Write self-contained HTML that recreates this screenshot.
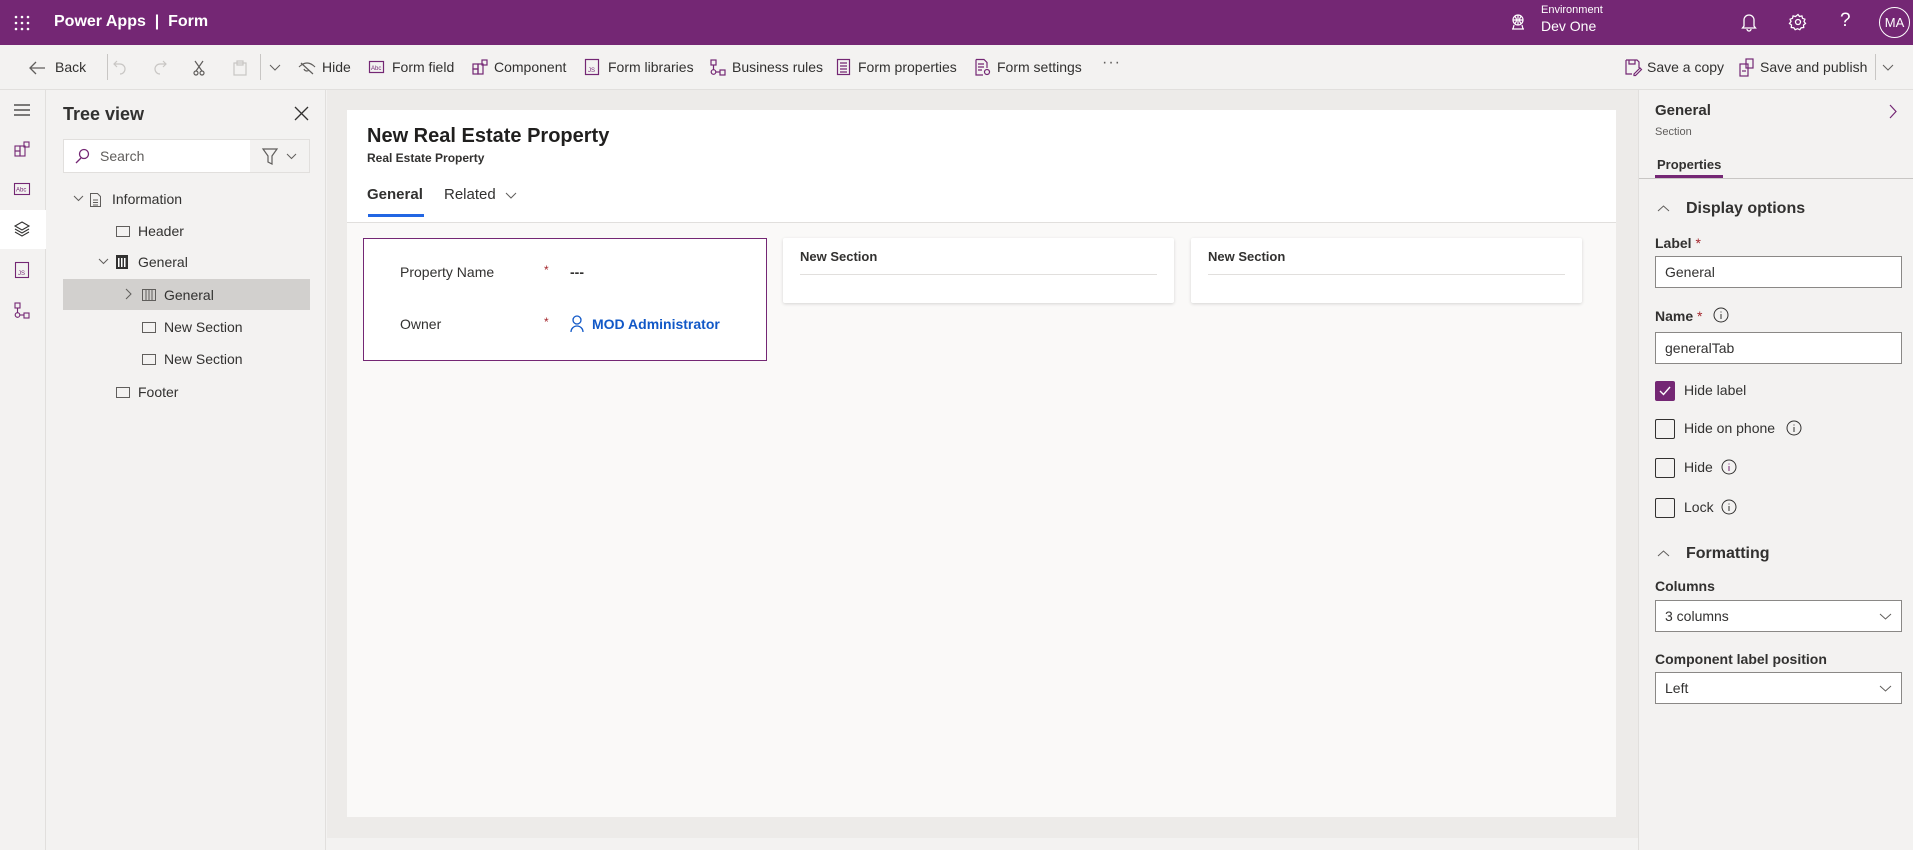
<!DOCTYPE html>
<html><head><meta charset="utf-8"><style>
*{box-sizing:border-box;margin:0;padding:0}
body{width:1913px;height:850px;overflow:hidden;font-family:"Liberation Sans",sans-serif;background:#f3f2f1;position:relative;color:#323130}
.a{position:absolute;white-space:nowrap}
svg{position:absolute;overflow:visible}
</style></head><body>
<!-- top bar -->
<div class="a" style="left:0;top:0;width:1913px;height:45px;background:#742774"></div>
<svg style="left:14px;top:15px" width="16" height="16" fill="#fff"><circle cx="2" cy="2" r="1.3"/><circle cx="8" cy="2" r="1.3"/><circle cx="14" cy="2" r="1.3"/><circle cx="2" cy="8" r="1.3"/><circle cx="8" cy="8" r="1.3"/><circle cx="14" cy="8" r="1.3"/><circle cx="2" cy="14" r="1.3"/><circle cx="8" cy="14" r="1.3"/><circle cx="14" cy="14" r="1.3"/></svg>
<div class="a" style="left:54px;top:13px;color:#fff;font-size:16px;font-weight:bold">Power Apps &nbsp;|&nbsp; Form</div>
<svg style="left:1510px;top:14px" width="16" height="16" fill="none" stroke="#fff" stroke-width="1.2"><circle cx="8" cy="6" r="5"/><path d="M3 6h10M8 1v10M5 2.5q3 3.5 0 7M11 2.5q-3 3.5 0 7M2 15h12M4 11l-1 4M12 11l1 4"/></svg>
<div class="a" style="left:1541px;top:4px;color:#fff;font-size:11px">Environment</div>
<div class="a" style="left:1541px;top:18px;color:#fff;font-size:14px">Dev One</div>
<svg style="left:1741px;top:13px" width="16" height="18" fill="none" stroke="#fff" stroke-width="1.3"><path d="M3 13V7a5 5 0 0110 0v6l1.5 2h-13zM6 16a2 2 0 004 0"/></svg>
<svg style="left:1789px;top:13px" width="18" height="18" fill="none" stroke="#fff" stroke-width="1.3"><circle cx="9" cy="9" r="2.5"/><path d="M9 1.5l1.5 2 2.4-.6.6 2.4 2.4.9-.9 2.3 1.5 2-2 1.5.2 2.5-2.5.2-1.4 2-2.3-1-2.3 1-1.4-2-2.5-.2.2-2.5-2-1.5 1.5-2-.9-2.3 2.4-.9.6-2.4 2.4.6z"/></svg>
<div class="a" style="left:1840px;top:10px;color:#fff;font-size:19px">?</div>
<div class="a" style="left:1879px;top:7px;width:31px;height:31px;border:1.3px solid #fff;border-radius:50%;color:#fff;font-size:13px;text-align:center;line-height:29px">MA</div>
<!-- toolbar -->
<div class="a" style="left:0;top:45px;width:1913px;height:45px;background:#f3f2f1;border-bottom:1px solid #e1dfdd"></div>
<div style="position:absolute;left:0;top:59px;font-size:14px;color:#323130">
<svg style="left:29px;top:2px" width="17" height="14" fill="none" stroke="#605e5c" stroke-width="1.3"><path d="M16 7H1M7 1L1 7l6 6"/></svg>
<div class="a" style="left:55px;top:0">Back</div>
<div class="a" style="left:107px;top:-5px;height:26px;border-left:1px solid #c8c6c4"></div>
<svg style="left:113px;top:1px" width="14" height="16" fill="none" stroke="#c8c6c4" stroke-width="1.2"><path d="M4 1L1 4l3 3M1 4h6a5 5 0 010 10"/></svg>
<svg style="left:153px;top:1px" width="14" height="16" fill="none" stroke="#c8c6c4" stroke-width="1.2"><path d="M10 1l3 3-3 3M13 4H7a5 5 0 000 10"/></svg>
<svg style="left:193px;top:1px" width="12" height="16" fill="none" stroke="#605e5c" stroke-width="1.2"><path d="M2 1l7 10M10 1L3 11"/><circle cx="3" cy="13" r="2"/><circle cx="9" cy="13" r="2"/></svg>
<svg style="left:233px;top:1px" width="14" height="16" fill="none" stroke="#c8c6c4" stroke-width="1.2"><rect x="1" y="3" width="12" height="12"/><rect x="4" y="1" width="6" height="4"/></svg>
<div class="a" style="left:260px;top:-5px;height:26px;border-left:1px solid #c8c6c4"></div>
<svg style="left:269px;top:5px" width="12" height="7" fill="none" stroke="#605e5c"><path d="M1 1l5 5 5-5"/></svg>
<svg style="left:298px;top:1px" width="18" height="14" fill="none" stroke="#605e5c" stroke-width="1.2"><path d="M1 7q8-8 16 0M3 3l12 11M6 9a3 3 0 005 1"/></svg>
<div class="a" style="left:322px;top:0">Hide</div>
<svg style="left:369px;top:2px" width="15" height="12" fill="none" stroke="#742774" stroke-width="1.2"><rect x=".5" y=".5" width="14" height="11"/><text x="2" y="9" font-size="6" fill="#742774" stroke="none">Abc</text></svg>
<div class="a" style="left:392px;top:0">Form field</div>
<svg style="left:472px;top:0" width="16" height="16" fill="none" stroke="#742774" stroke-width="1.2"><rect x="1" y="5" width="5" height="5"/><rect x="1" y="10" width="5" height="5"/><rect x="6" y="5" width="5" height="10"/><rect x="10" y="1" width="5" height="5"/></svg>
<div class="a" style="left:494px;top:0">Component</div>
<svg style="left:585px;top:0" width="14" height="16" fill="none" stroke="#742774" stroke-width="1.2"><rect x=".5" y=".5" width="13" height="15"/><text x="3" y="13" font-size="6" fill="#742774" stroke="none">JS</text></svg>
<div class="a" style="left:608px;top:0">Form libraries</div>
<svg style="left:710px;top:0" width="16" height="17" fill="none" stroke="#742774" stroke-width="1.2"><rect x="1" y="1" width="5" height="5"/><path d="M3.5 6v5"/><circle cx="3.5" cy="13" r="2.3"/><rect x="10" y="11" width="5" height="5"/><path d="M6 13h4"/></svg>
<div class="a" style="left:732px;top:0">Business rules</div>
<svg style="left:837px;top:0" width="13" height="16" fill="none" stroke="#742774" stroke-width="1.2"><rect x=".5" y=".5" width="12" height="15"/><path d="M3 4h7M3 7h7M3 10h7M3 13h7"/></svg>
<div class="a" style="left:858px;top:0">Form properties</div>
<svg style="left:975px;top:0" width="16" height="17" fill="none" stroke="#742774" stroke-width="1.2"><path d="M1 .5h8l3 3V9M1 .5V16h7M3 5h6M3 8h6M3 11h4"/><circle cx="12" cy="13" r="2.5"/></svg>
<div class="a" style="left:997px;top:0">Form settings</div>
<div class="a" style="left:1102px;top:-5px;color:#605e5c;font-size:16px;letter-spacing:1px">···</div>
<svg style="left:1625px;top:0" width="17" height="17" fill="none" stroke="#742774" stroke-width="1.2"><path d="M1 1h11l2 2v6M1 1v14h6M4 1v4h6V1"/><path d="M9 15l6-6 1.5 1.5-6 6H9z"/></svg>
<div class="a" style="left:1647px;top:0">Save a copy</div>
<svg style="left:1739px;top:-1px" width="15" height="19" fill="none" stroke="#742774" stroke-width="1.2"><rect x="1" y="6" width="8" height="12"/><rect x="7" y="1" width="7" height="9"/><path d="M3 13h4"/></svg>
<div class="a" style="left:1760px;top:0">Save and publish</div>
<div class="a" style="left:1875px;top:-5px;height:26px;border-left:1px solid #c8c6c4"></div>
<svg style="left:1882px;top:5px" width="12" height="7" fill="none" stroke="#605e5c"><path d="M1 1l5 5 5-5"/></svg>
</div>
<!-- left rail -->
<div class="a" style="left:0;top:90px;width:46px;height:760px;background:#f3f2f1;border-right:1px solid #e1dfdd"></div>
<div class="a" style="left:0;top:210px;width:46px;height:39px;background:#fff"></div>
<svg style="left:14px;top:104px" width="16" height="12" stroke="#323130" stroke-width="1.2"><path d="M0 1h16M0 6h16M0 11h16"/></svg>
<svg style="left:14px;top:141px" width="16" height="16" fill="none" stroke="#742774" stroke-width="1.1"><rect x="1" y="5" width="5" height="5"/><rect x="1" y="10" width="5" height="5"/><rect x="6" y="5" width="5" height="10"/><rect x="10" y="1" width="5" height="5"/></svg>
<svg style="left:14px;top:183px" width="16" height="12" fill="none" stroke="#742774" stroke-width="1.1"><rect x=".5" y=".5" width="15" height="11"/><text x="2" y="8.5" font-size="6" fill="#742774" stroke="none">Abc</text></svg>
<svg style="left:14px;top:221px" width="16" height="16" fill="none" stroke="#323130" stroke-width="1.1"><path d="M8 1l7 4-7 4-7-4zM1 8l7 4 7-4M1 11l7 4 7-4"/></svg>
<svg style="left:15px;top:262px" width="14" height="16" fill="none" stroke="#742774" stroke-width="1.1"><rect x=".5" y=".5" width="13" height="15"/><text x="3" y="13" font-size="6" fill="#742774" stroke="none">JS</text></svg>
<svg style="left:14px;top:302px" width="16" height="17" fill="none" stroke="#742774" stroke-width="1.1"><rect x="1" y="1" width="5" height="5"/><path d="M3.5 6v5"/><circle cx="3.5" cy="13" r="2.3"/><rect x="10" y="11" width="5" height="5"/><path d="M6 13h4"/></svg>
<!-- tree -->
<div class="a" style="left:46px;top:90px;width:280px;height:760px;background:#f3f2f1;border-right:1px solid #e1dfdd"></div>
<div class="a" style="left:63px;top:104px;font-size:18px;font-weight:bold;color:#323130">Tree view</div>
<svg style="left:295px;top:107px" width="13" height="13" stroke="#323130" stroke-width="1.3"><path d="M0 0l13 13M13 0L0 13"/></svg>
<div class="a" style="left:63px;top:139px;width:247px;height:34px;background:#fff;border:1px solid #e1dfdd"></div>
<div class="a" style="left:250px;top:140px;width:59px;height:32px;background:#f3f2f1"></div>
<svg style="left:75px;top:148px" width="14" height="16" fill="none" stroke="#742774" stroke-width="1.3"><circle cx="9" cy="6" r="4.5"/><path d="M6 10L1 15"/></svg>
<div class="a" style="left:100px;top:148px;font-size:14px;color:#605e5c">Search</div>
<svg style="left:262px;top:148px" width="16" height="17" fill="none" stroke="#605e5c" stroke-width="1.2"><path d="M1 1h14L10 8v8l-4-2V8z"/></svg>
<svg style="left:286px;top:153px" width="11" height="6" fill="none" stroke="#605e5c"><path d="M1 1l4.5 4.5L10 1"/></svg>
<div class="a" style="left:63px;top:279px;width:247px;height:31px;background:#d2d0ce"></div>
<div style="position:absolute;left:0;top:0;font-size:14px;color:#323130">
<svg style="left:73px;top:195px" width="11" height="7" fill="none" stroke="#605e5c"><path d="M1 1l4.5 4.5L10 1"/></svg>
<svg style="left:90px;top:193px" width="11" height="14" fill="none" stroke="#605e5c"><path d="M.5.5h7l3 3v10H.5zM3 7h5M3 9.5h5M3 12h5"/></svg>
<div class="a" style="left:112px;top:191px">Information</div>
<svg style="left:116px;top:226px" width="14" height="11" fill="none" stroke="#605e5c"><rect x=".5" y=".5" width="13" height="10"/></svg>
<div class="a" style="left:138px;top:223px">Header</div>
<svg style="left:98px;top:258px" width="11" height="7" fill="none" stroke="#605e5c"><path d="M1 1l4.5 4.5L10 1"/></svg>
<svg style="left:116px;top:255px" width="12" height="14" fill="#323130"><rect width="12" height="14"/><rect x="2" y="3" width="1.5" height="9" fill="#fff"/><rect x="5" y="3" width="1.5" height="9" fill="#fff"/><rect x="8" y="3" width="1.5" height="9" fill="#fff"/></svg>
<div class="a" style="left:138px;top:254px">General</div>
<svg style="left:125px;top:288px" width="7" height="12" fill="none" stroke="#605e5c"><path d="M1 1l5 5-5 5"/></svg>
<svg style="left:142px;top:289px" width="14" height="12" fill="none" stroke="#605e5c"><path d="M.5.5h13v11H.5zM4 .5v11M7 .5v11M10 .5v11"/></svg>
<div class="a" style="left:164px;top:287px">General</div>
<svg style="left:142px;top:322px" width="14" height="11" fill="none" stroke="#605e5c"><rect x=".5" y=".5" width="13" height="10"/></svg>
<div class="a" style="left:164px;top:319px">New Section</div>
<svg style="left:142px;top:354px" width="14" height="11" fill="none" stroke="#605e5c"><rect x=".5" y=".5" width="13" height="10"/></svg>
<div class="a" style="left:164px;top:351px">New Section</div>
<svg style="left:116px;top:387px" width="14" height="11" fill="none" stroke="#605e5c"><rect x=".5" y=".5" width="13" height="10"/></svg>
<div class="a" style="left:138px;top:384px">Footer</div>
</div>
<!-- canvas -->
<div class="a" style="left:327px;top:90px;width:1311px;height:748px;background:#edebe9"></div>
<div class="a" style="left:347px;top:110px;width:1269px;height:707px;background:#faf9f8"></div>
<div class="a" style="left:347px;top:110px;width:1269px;height:113px;background:#fff;border-bottom:1px solid #e1dfdd"></div>
<div class="a" style="left:367px;top:125px;font-size:20px;font-weight:bold;color:#201f1e">New Real Estate Property</div>
<div class="a" style="left:367px;top:151px;font-size:12px;font-weight:bold;color:#323130">Real Estate Property</div>
<div class="a" style="left:367px;top:186px;font-size:15px;font-weight:bold;color:#323130">General</div>
<div class="a" style="left:368px;top:214px;width:56px;height:3px;background:#2266e3"></div>
<div class="a" style="left:444px;top:186px;font-size:15px;color:#323130">Related</div>
<svg style="left:505px;top:192px" width="12" height="7" fill="none" stroke="#605e5c"><path d="M1 1l5 5 5-5"/></svg>
<div class="a" style="left:363px;top:238px;width:404px;height:123px;background:#fff;border:1px solid #742774"></div>
<div class="a" style="left:400px;top:264px;font-size:14px;color:#323130">Property Name</div>
<div class="a" style="left:544px;top:263px;font-size:12px;color:#a4262c">*</div>
<div class="a" style="left:570px;top:264px;font-size:14px;color:#323130;font-weight:bold">---</div>
<div class="a" style="left:400px;top:316px;font-size:14px;color:#323130">Owner</div>
<div class="a" style="left:544px;top:315px;font-size:12px;color:#a4262c">*</div>
<svg style="left:570px;top:315px" width="14" height="18" fill="none" stroke="#1158c7" stroke-width="1.3"><circle cx="7" cy="5" r="4"/><path d="M1 17a6 6 0 0112 0"/></svg>
<div class="a" style="left:592px;top:316px;font-size:14px;color:#1158c7;font-weight:bold">MOD Administrator</div>
<div class="a" style="left:783px;top:238px;width:391px;height:65px;background:#fff;border-radius:2px;box-shadow:0 1px 3px rgba(0,0,0,.15)"></div>
<div class="a" style="left:800px;top:249px;font-size:13px;font-weight:bold;color:#323130">New Section</div>
<div class="a" style="left:800px;top:274px;width:357px;border-top:1px solid #e1dfdd"></div>
<div class="a" style="left:1191px;top:238px;width:391px;height:65px;background:#fff;border-radius:2px;box-shadow:0 1px 3px rgba(0,0,0,.15)"></div>
<div class="a" style="left:1208px;top:249px;font-size:13px;font-weight:bold;color:#323130">New Section</div>
<div class="a" style="left:1208px;top:274px;width:357px;border-top:1px solid #e1dfdd"></div>
<div class="a" style="left:327px;top:838px;width:1311px;height:12px;background:#f3f2f1"></div>
<!-- right panel -->
<div class="a" style="left:1638px;top:90px;width:275px;height:760px;background:#f3f2f1;border-left:1px solid #e1dfdd"></div>
<div class="a" style="left:1655px;top:102px;font-size:15px;font-weight:bold;color:#323130">General</div>
<svg style="left:1889px;top:104px" width="8" height="15" fill="none" stroke="#742774" stroke-width="1.2"><path d="M1 1l6 6.5L1 14"/></svg>
<div class="a" style="left:1655px;top:126px;font-size:11px;color:#605e5c">Section</div>
<div class="a" style="left:1657px;top:157px;font-size:13px;font-weight:bold;color:#323130">Properties</div>
<div class="a" style="left:1655px;top:175px;width:68px;height:3px;background:#742774"></div>
<div class="a" style="left:1639px;top:178px;width:274px;border-top:1px solid #c8c6c4"></div>
<svg style="left:1657px;top:205px" width="13" height="7" fill="none" stroke="#605e5c"><path d="M1 6l5.5-5L12 6"/></svg>
<div class="a" style="left:1686px;top:200px;font-size:16px;font-weight:bold;color:#323130">Display options</div>
<div class="a" style="left:1655px;top:235px;font-size:14px;font-weight:bold">Label <span style="color:#a4262c;font-weight:normal">*</span></div>
<div class="a" style="left:1655px;top:256px;width:247px;height:32px;background:#fff;border:1px solid #8a8886;font-size:14px;padding:7px 9px">General</div>
<div class="a" style="left:1655px;top:308px;font-size:14px;font-weight:bold">Name <span style="color:#a4262c;font-weight:normal">*</span></div>
<svg style="left:1713px;top:307px" width="16" height="16" fill="none" stroke="#323130"><circle cx="8" cy="8" r="7"/><path d="M8 7v5M8 4.5v1"/></svg>
<div class="a" style="left:1655px;top:332px;width:247px;height:32px;background:#fff;border:1px solid #8a8886;font-size:14px;padding:7px 9px">generalTab</div>
<div class="a" style="left:1655px;top:381px;width:20px;height:20px;background:#742774;border-radius:2px"></div>
<svg style="left:1659px;top:386px" width="12" height="10" fill="none" stroke="#fff" stroke-width="1.4"><path d="M1 5l3.5 3.5L11 1"/></svg>
<div class="a" style="left:1684px;top:382px;font-size:14px">Hide label</div>
<div class="a" style="left:1655px;top:419px;width:20px;height:20px;border:1px solid #323130;border-radius:2px"></div>
<div class="a" style="left:1684px;top:420px;font-size:14px">Hide on phone</div>
<svg style="left:1786px;top:420px" width="16" height="16" fill="none" stroke="#323130"><circle cx="8" cy="8" r="7"/><path d="M8 7v5M8 4.5v1"/></svg>
<div class="a" style="left:1655px;top:458px;width:20px;height:20px;border:1px solid #323130;border-radius:2px"></div>
<div class="a" style="left:1684px;top:459px;font-size:14px">Hide</div>
<svg style="left:1721px;top:459px" width="16" height="16" fill="none" stroke="#323130"><circle cx="8" cy="8" r="7"/><path d="M8 7v5M8 4.5v1" stroke="#742774"/></svg>
<div class="a" style="left:1655px;top:498px;width:20px;height:20px;border:1px solid #323130;border-radius:2px"></div>
<div class="a" style="left:1684px;top:499px;font-size:14px">Lock</div>
<svg style="left:1721px;top:499px" width="16" height="16" fill="none" stroke="#323130"><circle cx="8" cy="8" r="7"/><path d="M8 7v5M8 4.5v1"/></svg>
<svg style="left:1657px;top:550px" width="13" height="7" fill="none" stroke="#605e5c"><path d="M1 6l5.5-5L12 6"/></svg>
<div class="a" style="left:1686px;top:545px;font-size:16px;font-weight:bold">Formatting</div>
<div class="a" style="left:1655px;top:578px;font-size:14px;font-weight:bold">Columns</div>
<div class="a" style="left:1655px;top:600px;width:247px;height:32px;background:#fff;border:1px solid #8a8886;font-size:14px;padding:7px 9px">3 columns</div>
<svg style="left:1879px;top:613px" width="13" height="7" fill="none" stroke="#605e5c"><path d="M1 1l5.5 5L12 1"/></svg>
<div class="a" style="left:1655px;top:651px;font-size:14px;font-weight:bold">Component label position</div>
<div class="a" style="left:1655px;top:672px;width:247px;height:32px;background:#fff;border:1px solid #8a8886;font-size:14px;padding:7px 9px">Left</div>
<svg style="left:1879px;top:685px" width="13" height="7" fill="none" stroke="#605e5c"><path d="M1 1l5.5 5L12 1"/></svg>
</body></html>
